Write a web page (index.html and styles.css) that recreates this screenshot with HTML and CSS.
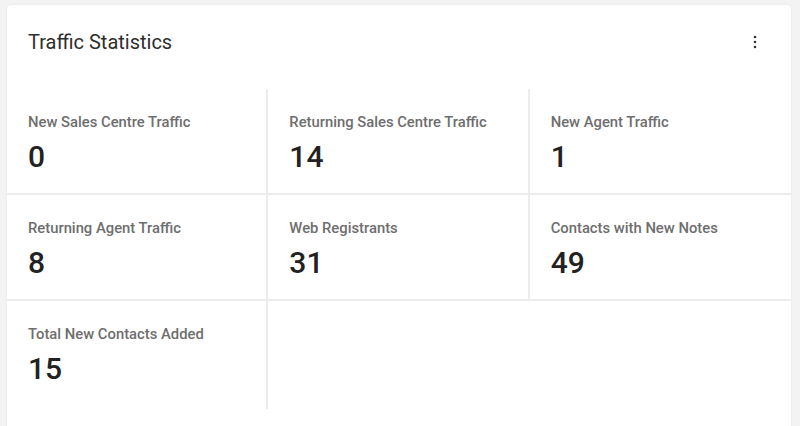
FILE: index.html
```html
<!DOCTYPE html>
<html lang="en">
<head>
    <meta charset="UTF-8">
    <meta name="viewport" content="width=device-width, initial-scale=1.0">
    <title>Traffic Statistics</title>
    <link rel="stylesheet" href="styles.css">
</head>
<body>
    <div class="card">
        <div class="card-header">
            <h2 class="card-title">Traffic Statistics</h2>
            <button class="menu-btn" aria-label="More options">
                <svg width="4" height="14" viewBox="0 0 4 14">
                    <circle cx="2" cy="2" r="1.3" fill="#333"/>
                    <circle cx="2" cy="7" r="1.3" fill="#333"/>
                    <circle cx="2" cy="12" r="1.3" fill="#333"/>
                </svg>
            </button>
        </div>

        <div class="stats">
            <div class="stat">
                <p class="stat-label">New Sales Centre Traffic</p>
                <p class="stat-value">0</p>
            </div>
            <div class="stat">
                <p class="stat-label">Returning Sales Centre Traffic</p>
                <p class="stat-value">14</p>
            </div>
            <div class="stat">
                <p class="stat-label">New Agent Traffic</p>
                <p class="stat-value">1</p>
            </div>
            <div class="stat">
                <p class="stat-label">Returning Agent Traffic</p>
                <p class="stat-value">8</p>
            </div>
            <div class="stat">
                <p class="stat-label">Web Registrants</p>
                <p class="stat-value">31</p>
            </div>
            <div class="stat">
                <p class="stat-label">Contacts with New Notes</p>
                <p class="stat-value">49</p>
            </div>
            <div class="stat last-row">
                <p class="stat-label">Total New Contacts Added</p>
                <p class="stat-value">15</p>
            </div>
        </div>
    </div>
</body>
</html>
```

FILE: styles.css
```css
:root {
    --page-bg: #f3f3f3;
    --line-color: #ececec;
    --title-color: #2e2e2e;
    --label-color: #6e6e6e;
    --value-color: #222222;
}

body {
    margin: 0;
    padding: 5px 9px 0 7px;
    background-color: var(--page-bg);
    font-family: 'Roboto', 'Liberation Sans', sans-serif;
    height: 426px;
    box-sizing: border-box;
    overflow: hidden;
}

.card {
    background-color: white;
    border-radius: 4px;
    box-shadow: 0 0 2px rgba(0, 0, 0, 0.08);
    height: 440px;
}

.card-header {
    display: flex;
    align-items: center;
    justify-content: space-between;
    padding: 25px 34px 35px 21px;
}

.card-title {
    margin: 0;
    font-size: 20px;
    line-height: 24px;
    font-weight: 400;
    color: var(--title-color);
}

.menu-btn {
    background: none;
    border: none;
    padding: 0;
    display: flex;
    cursor: pointer;
}

.stats {
    display: grid;
    grid-template-columns: repeat(3, 1fr);
}

.stat {
    height: 106px;
    box-sizing: border-box;
    padding: 24px 20px 0 21px;
    border-right: 2px solid var(--line-color);
    border-bottom: 2px solid var(--line-color);
}

.stat:nth-child(3n) {
    border-right: none;
}

.stat.last-row {
    border-bottom: none;
    height: 108px;
}

.stat-label {
    margin: 0;
    font-size: 14.8px;
    line-height: 18px;
    font-weight: 500;
    color: var(--label-color);
}

.stat-value {
    margin: 8px 0 0;
    font-size: 30px;
    line-height: 36px;
    font-weight: 500;
    color: var(--value-color);
}
```
